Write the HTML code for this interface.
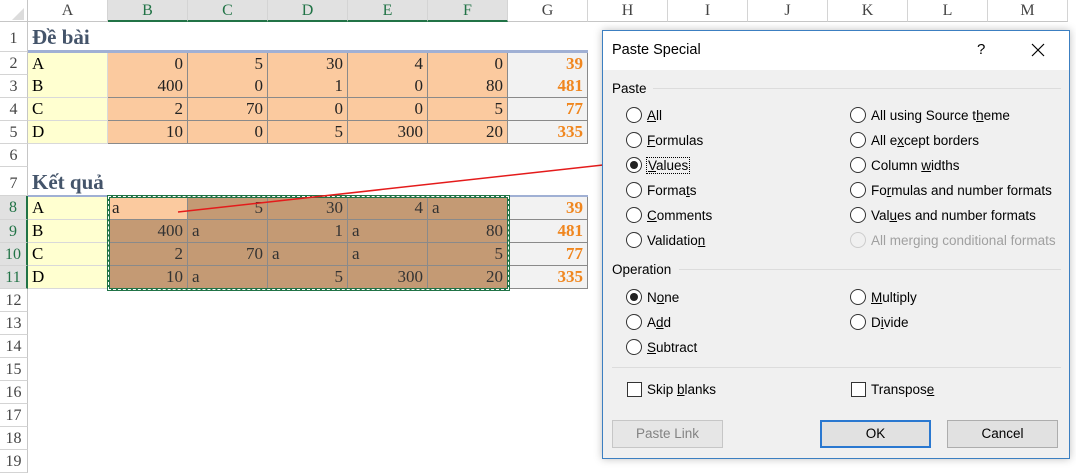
<!DOCTYPE html>
<html><head><meta charset="utf-8"><style>
*{box-sizing:border-box;margin:0;padding:0}
body{width:1076px;height:464px;overflow:hidden;background:#fff;position:relative;font-family:"Liberation Serif",serif}
.a{position:absolute}
.ch{position:absolute;top:0;height:22px;border-right:1px solid #d4d4d4;border-bottom:1px solid #c6c6c6;background:#fff;color:#444;font-size:16px;text-align:center;line-height:22px}
.ch.s{background:#e1e1e1;color:#217346;border-bottom:2px solid #217346}
.rh{position:absolute;left:0;width:28px;border-bottom:1px solid #d4d4d4;border-right:1px solid #c6c6c6;color:#444;font-size:16px;text-align:center;background:#fff}
.rh.s{background:#e1e1e1;color:#217346;border-right:2px solid #217346}
.r{position:absolute;left:28px;display:flex;height:23px}
.r div{width:80px;height:23px;border-right:1px solid #8a8a8a;border-bottom:1px solid #8a8a8a;font-size:17px;line-height:22px;padding:0 4px;text-align:right;color:#222}
.r .y{background:#ffffd0;text-align:left;color:#000;border-color:#ffffd0 #d9d9d9 #d9d9d9 #d9d9d9}
.r .p{background:#fbca9f}
.r .b{background:#c49a74;color:#333}
.r .g{background:#f2f2f2;color:#f0861e;font-weight:bold}
.r .l{text-align:left}
.t{position:absolute;left:32px;font-size:21px;font-weight:bold;color:#44546a}
.dl{position:absolute;left:602px;top:30px;width:468px;height:429px;border:1px solid #3c7fc1;background:#f0f0f0;font-family:"Liberation Sans",sans-serif;font-size:13px;color:#000;box-shadow:0 0 8px rgba(0,0,0,.25)}
.rd{position:absolute;width:16px;height:16px;border:1px solid #333;border-radius:50%;background:#fff;margin-top:-1px;margin-left:-1px}
.rd.on::after{content:"";position:absolute;left:3px;top:3px;width:8px;height:8px;border-radius:50%;background:#222}
.lb{position:absolute;white-space:nowrap;font-size:13.5px}
.cb{position:absolute;width:15px;height:15px;border:1px solid #333;background:#fff}
.bt{position:absolute;top:389px;width:111px;height:28px;border:1px solid #adadad;background:#e1e1e1;text-align:center;line-height:26px;font-size:13.5px}
u{text-decoration:underline}
.hl{position:absolute;height:1px;background:#dcdcdc}
</style></head><body>
<div class="a" style="left:0;top:0;width:28px;height:22px;border-right:1px solid #c6c6c6;border-bottom:1px solid #c6c6c6"></div>
<div class="a" style="left:12px;top:8px;width:0;height:0;border-left:12px solid transparent;border-bottom:12px solid #dcdcdc"></div>
<div class="ch" style="left:28px;width:80px">A</div>
<div class="ch s" style="left:108px;width:80px">B</div>
<div class="ch s" style="left:188px;width:80px">C</div>
<div class="ch s" style="left:268px;width:80px">D</div>
<div class="ch s" style="left:348px;width:80px">E</div>
<div class="ch s" style="left:428px;width:80px">F</div>
<div class="ch" style="left:508px;width:80px">G</div>
<div class="ch" style="left:588px;width:80px">H</div>
<div class="ch" style="left:668px;width:80px">I</div>
<div class="ch" style="left:748px;width:80px">J</div>
<div class="ch" style="left:828px;width:80px">K</div>
<div class="ch" style="left:908px;width:80px">L</div>
<div class="ch" style="left:988px;width:80px">M</div>

<div class="rh" style="top:22px;height:30px;line-height:34px">1</div>
<div class="rh" style="top:52px;height:23px;line-height:23px">2</div>
<div class="rh" style="top:75px;height:23px;line-height:23px">3</div>
<div class="rh" style="top:98px;height:23px;line-height:23px">4</div>
<div class="rh" style="top:121px;height:23px;line-height:23px">5</div>
<div class="rh" style="top:144px;height:23px;line-height:23px">6</div>
<div class="rh" style="top:167px;height:29px;line-height:33px">7</div>
<div class="rh s" style="top:196px;height:24px;line-height:24px">8</div>
<div class="rh s" style="top:220px;height:23px;line-height:23px">9</div>
<div class="rh s" style="top:243px;height:23px;line-height:23px">10</div>
<div class="rh s" style="top:266px;height:23px;line-height:23px">11</div>
<div class="rh" style="top:289px;height:23px;line-height:23px">12</div>
<div class="rh" style="top:312px;height:23px;line-height:23px">13</div>
<div class="rh" style="top:335px;height:23px;line-height:23px">14</div>
<div class="rh" style="top:358px;height:23px;line-height:23px">15</div>
<div class="rh" style="top:381px;height:23px;line-height:23px">16</div>
<div class="rh" style="top:404px;height:23px;line-height:23px">17</div>
<div class="rh" style="top:427px;height:23px;line-height:23px">18</div>
<div class="rh" style="top:450px;height:23px;line-height:23px">19</div>

<div class="t" style="top:25px">Đề bài</div>
<div class="a" style="left:28px;top:50px;width:560px;height:3px;background:#a0b0d4"></div>
<div class="r" style="top:53px;height:22px"><div class="y">A</div><div class="p">0</div><div class="p">5</div><div class="p">30</div><div class="p">4</div><div class="p">0</div><div class="g">39</div></div>
<div class="r" style="top:75px"><div class="y">B</div><div class="p">400</div><div class="p">0</div><div class="p">1</div><div class="p">0</div><div class="p">80</div><div class="g">481</div></div>
<div class="r" style="top:98px"><div class="y">C</div><div class="p">2</div><div class="p">70</div><div class="p">0</div><div class="p">0</div><div class="p">5</div><div class="g">77</div></div>
<div class="r" style="top:121px"><div class="y">D</div><div class="p">10</div><div class="p">0</div><div class="p">5</div><div class="p">300</div><div class="p">20</div><div class="g">335</div></div>

<div class="t" style="top:170px">Kết quả</div>
<div class="a" style="left:28px;top:195px;width:560px;height:3px;background:#a0b0d4"></div>
<div class="r" style="top:197px"><div class="y">A</div><div class="p l">a</div><div class="b">5</div><div class="b">30</div><div class="b">4</div><div class="b l">a</div><div class="g">39</div></div>
<div class="r" style="top:220px"><div class="y">B</div><div class="b">400</div><div class="b l">a</div><div class="b">1</div><div class="b l">a</div><div class="b">80</div><div class="g">481</div></div>
<div class="r" style="top:243px"><div class="y">C</div><div class="b">2</div><div class="b">70</div><div class="b l">a</div><div class="b l">a</div><div class="b">5</div><div class="g">77</div></div>
<div class="r" style="top:266px"><div class="y">D</div><div class="b">10</div><div class="b l">a</div><div class="b">5</div><div class="b">300</div><div class="b">20</div><div class="g">335</div></div>
<div class="a" style="left:107px;top:195px;width:403px;height:96px;border:3px solid #217346"><div class="a" style="left:-2px;top:-2px;right:-2px;bottom:-2px;border:1px dashed #fff"></div></div>

<svg class="a" style="left:0;top:0" width="1076" height="464"><line x1="178" y1="212" x2="612" y2="164" stroke="#e41b1b" stroke-width="1.5"/><polygon points="622,163 610,159 611,168" fill="#e41b1b"/></svg>

<div class="dl">
<div class="a" style="left:0;top:0;width:466px;height:39px;background:#fff"></div>
<div class="lb" style="left:9px;top:11px;font-size:14.5px">Paste Special</div>
<div class="lb" style="left:374px;top:10px;font-size:15px">?</div>
<svg class="a" style="left:428px;top:12px" width="14" height="14"><path d="M1 1L13 13M13 1L1 13" stroke="#000" stroke-width="1.2"/></svg>
<div class="lb" style="left:9px;top:50px">Paste</div><div class="hl" style="left:50px;top:57px;width:408px"></div>
<div class="rd" style="left:24px;top:77px"></div><div class="lb" style="left:44px;top:77px"><u>A</u>ll</div>
<div class="rd" style="left:24px;top:102px"></div><div class="lb" style="left:44px;top:102px"><u>F</u>ormulas</div>
<div class="rd on" style="left:24px;top:127px"></div><div class="lb" style="left:44px;top:127px;outline:1px dotted #000;padding:0 1px"><u>V</u>alues</div>
<div class="rd" style="left:24px;top:152px"></div><div class="lb" style="left:44px;top:152px">Forma<u>t</u>s</div>
<div class="rd" style="left:24px;top:177px"></div><div class="lb" style="left:44px;top:177px"><u>C</u>omments</div>
<div class="rd" style="left:24px;top:202px"></div><div class="lb" style="left:44px;top:202px">Validatio<u>n</u></div>
<div class="rd" style="left:248px;top:77px"></div><div class="lb" style="left:268px;top:77px">All using Source t<u>h</u>eme</div>
<div class="rd" style="left:248px;top:102px"></div><div class="lb" style="left:268px;top:102px">All e<u>x</u>cept borders</div>
<div class="rd" style="left:248px;top:127px"></div><div class="lb" style="left:268px;top:127px">Column <u>w</u>idths</div>
<div class="rd" style="left:248px;top:152px"></div><div class="lb" style="left:268px;top:152px">Fo<u>r</u>mulas and number formats</div>
<div class="rd" style="left:248px;top:177px"></div><div class="lb" style="left:268px;top:177px">Val<u>u</u>es and number formats</div>
<div class="rd" style="left:248px;top:202px;border-color:#ccc;background:#f0f0f0"></div><div class="lb" style="left:268px;top:202px;color:#a0a0a0">All merging conditional formats</div>
<div class="lb" style="left:9px;top:231px">Operation</div><div class="hl" style="left:76px;top:238px;width:382px"></div>
<div class="rd on" style="left:24px;top:259px"></div><div class="lb" style="left:44px;top:259px">N<u>o</u>ne</div>
<div class="rd" style="left:24px;top:284px"></div><div class="lb" style="left:44px;top:284px">A<u>d</u>d</div>
<div class="rd" style="left:24px;top:309px"></div><div class="lb" style="left:44px;top:309px"><u>S</u>ubtract</div>
<div class="rd" style="left:248px;top:259px"></div><div class="lb" style="left:268px;top:259px"><u>M</u>ultiply</div>
<div class="rd" style="left:248px;top:284px"></div><div class="lb" style="left:268px;top:284px">D<u>i</u>vide</div>
<div class="hl" style="left:9px;top:336px;width:449px"></div>
<div class="cb" style="left:24px;top:351px"></div><div class="lb" style="left:44px;top:351px">Skip <u>b</u>lanks</div>
<div class="cb" style="left:248px;top:351px"></div><div class="lb" style="left:268px;top:351px">Transpos<u>e</u></div>
<div class="bt" style="left:9px;color:#838383;background:#e6e6e6;border-color:#c6c6c6">Paste Link</div>
<div class="bt" style="left:217px;border:2px solid #2a78d0;line-height:24px">OK</div>
<div class="bt" style="left:344px">Cancel</div>
</div>
</body></html>
